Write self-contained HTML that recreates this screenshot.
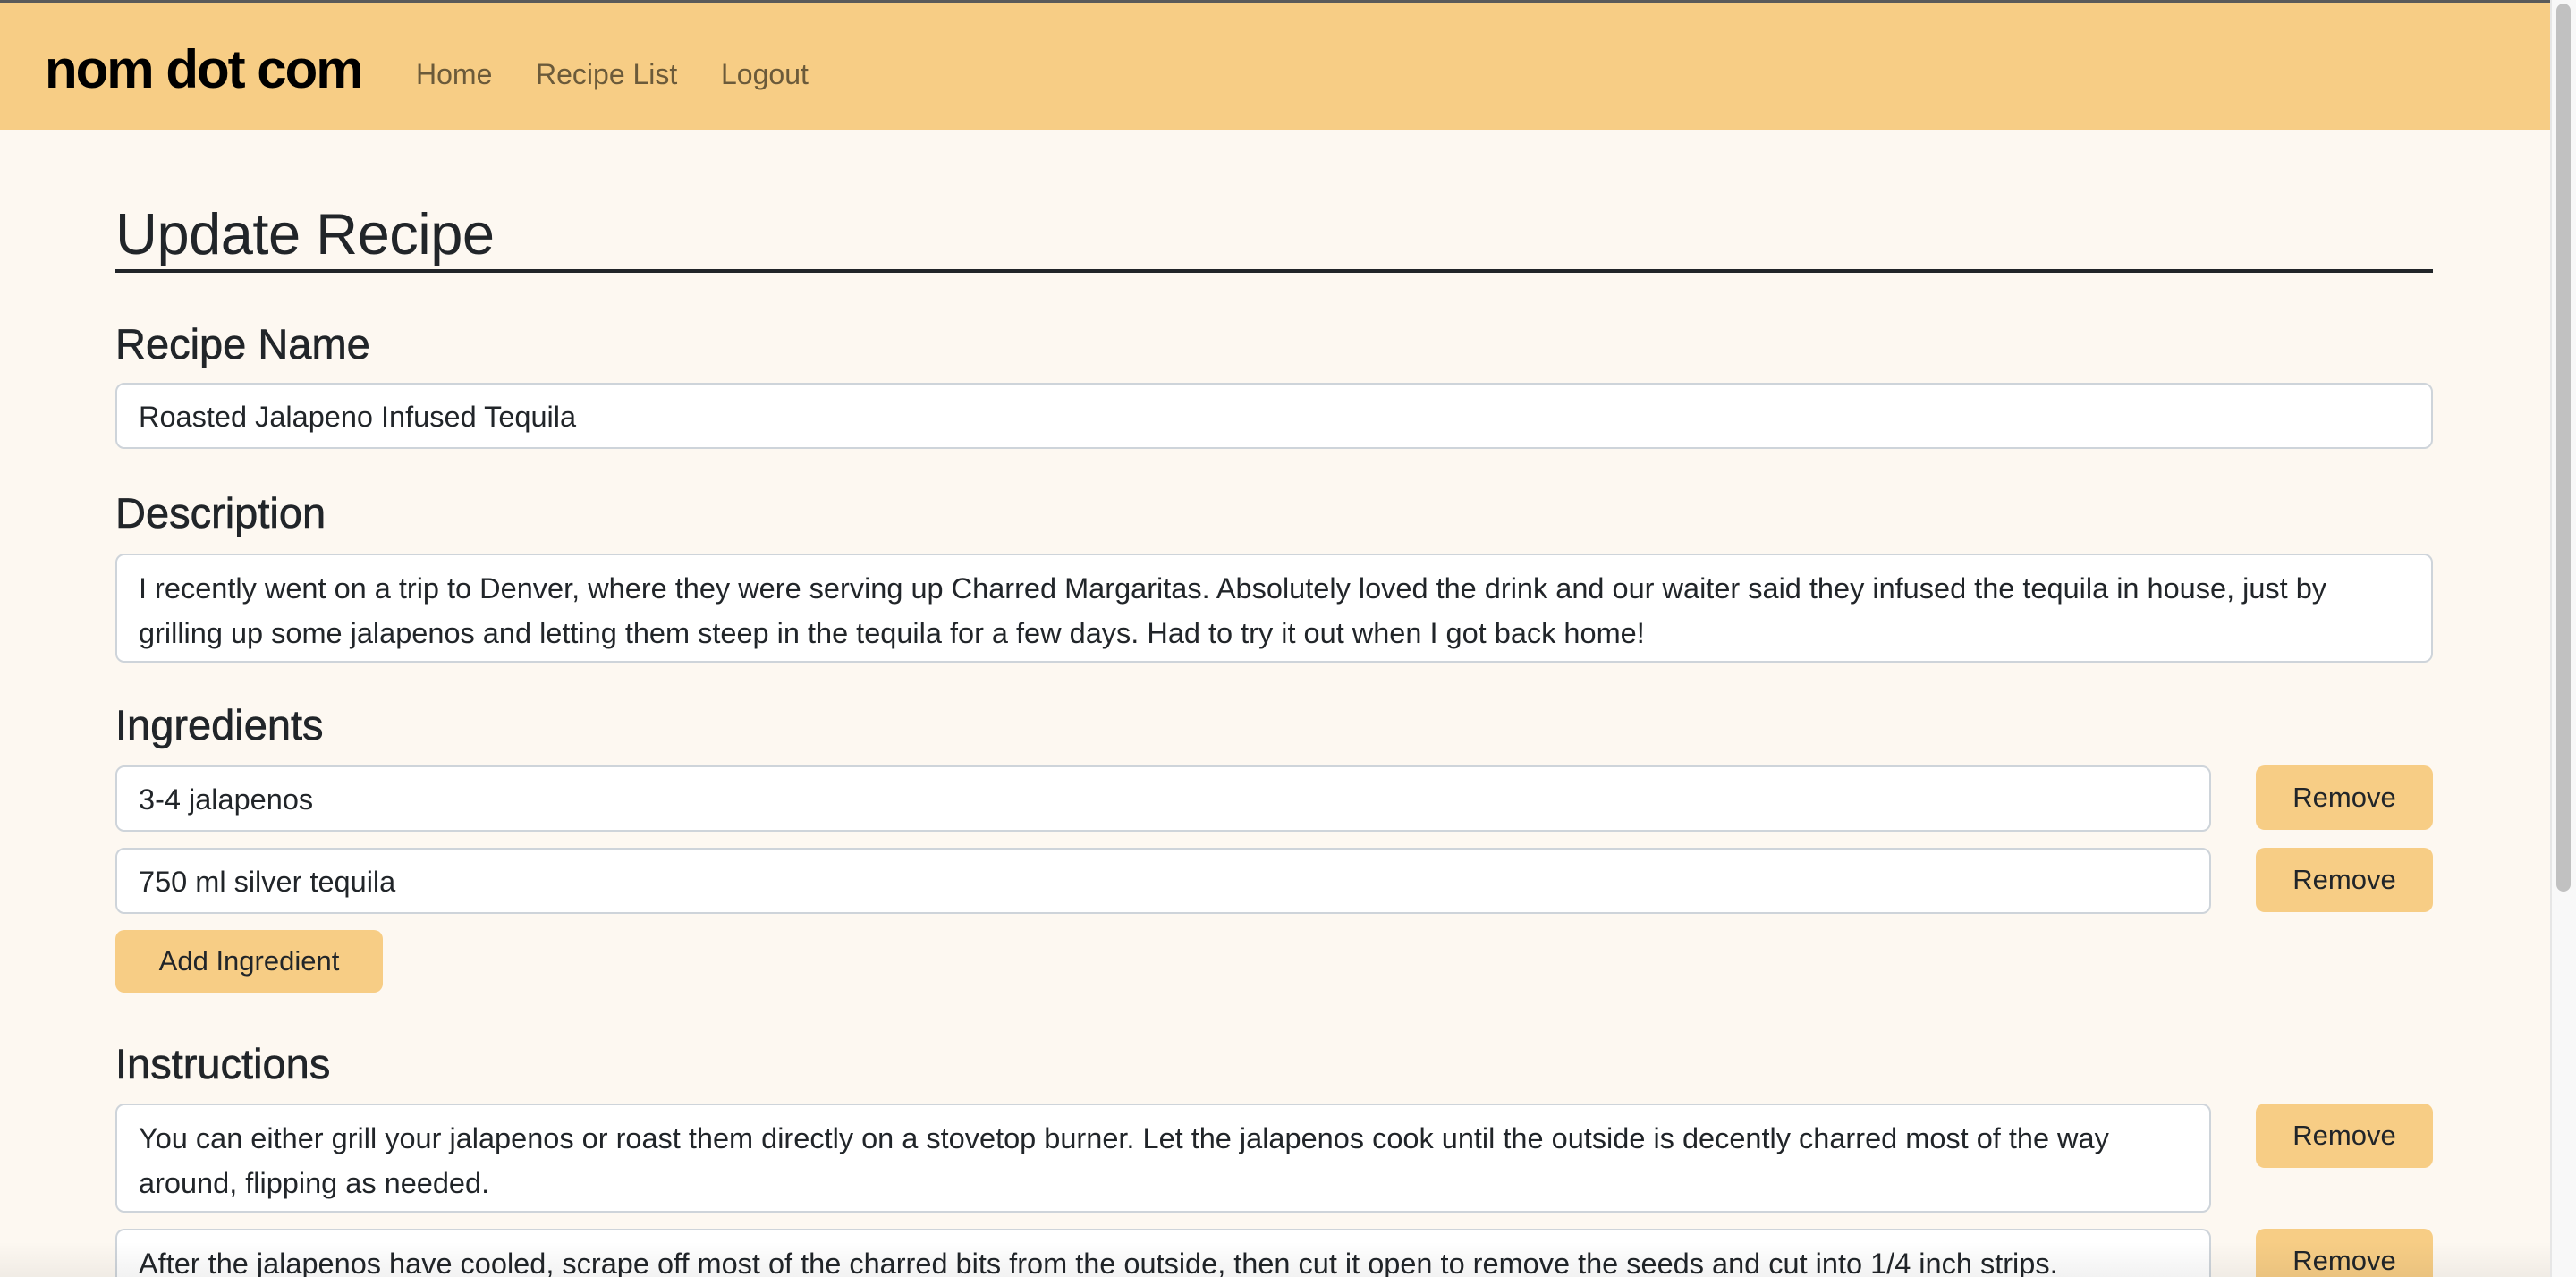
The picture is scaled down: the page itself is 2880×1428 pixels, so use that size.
<!DOCTYPE html>
<html><head><meta charset="utf-8">
<style>
*{box-sizing:border-box;margin:0;padding:0}
html,body{width:2880px;height:1428px;overflow:hidden;background:#fdf8f1;font-family:"Liberation Sans",sans-serif;color:#212529;position:relative}
.hdr{position:absolute;left:0;top:0;width:2851px;height:145px;background:#f7cd85;border-top:3px solid #5a5a5a}
.logo{position:absolute;left:50px;top:40px;font-size:60px;font-weight:bold;letter-spacing:-2px;color:#000}
.nav{position:absolute;top:62px;font-size:32px;color:#6b5a3a}
.sb{position:absolute;left:2851px;top:0;width:29px;height:1428px;background:#f8f8f8;border-left:2px solid #e6e6e6}
.thumb{position:absolute;left:2858px;top:4px;width:16px;height:993px;background:#c1c1c1;border-radius:8px}
.abs{position:absolute}
h1{position:absolute;left:129px;top:224px;font-size:65px;font-weight:normal;letter-spacing:-0.5px}
.rule{position:absolute;left:129px;top:301px;width:2591px;height:4px;background:#212529}
.lbl{position:absolute;left:129px;font-size:47px;-webkit-text-stroke:0.6px #212529}
.in{position:absolute;background:#fff;border:2px solid #ced4da;border-radius:10px;font-size:32.5px;padding-left:24px;white-space:nowrap;overflow:hidden}
.btn{position:absolute;background:#f7cd85;border-radius:10px;font-size:31px;text-align:center}
</style></head><body>
<div class="hdr">
<div class="logo">nom dot com</div>
<div class="nav" style="left:465px">Home</div>
<div class="nav" style="left:599px">Recipe List</div>
<div class="nav" style="left:806px">Logout</div>
</div>
<div class="sb"></div><div class="thumb"></div>

<h1>Update Recipe</h1>
<div class="rule"></div>

<div class="lbl" style="top:357px">Recipe Name</div>
<div class="in" style="left:129px;top:428px;width:2591px;height:74px;line-height:72px">Roasted Jalapeno Infused Tequila</div>

<div class="lbl" style="top:546px">Description</div>
<div class="in" style="left:129px;top:619px;width:2591px;height:122px;line-height:50px;padding-top:12px">I recently went on a trip to Denver, where they were serving up Charred Margaritas. Absolutely loved the drink and our waiter said they infused the tequila in house, just by<br>grilling up some jalapenos and letting them steep in the tequila for a few days. Had to try it out when I got back home!</div>

<div class="lbl" style="top:783px">Ingredients</div>
<div class="in" style="left:129px;top:856px;width:2343px;height:74px;line-height:72px">3-4 jalapenos</div>
<div class="btn" style="left:2522px;top:856px;width:198px;height:72px;line-height:72px">Remove</div>
<div class="in" style="left:129px;top:948px;width:2343px;height:74px;line-height:72px">750 ml silver tequila</div>
<div class="btn" style="left:2522px;top:948px;width:198px;height:72px;line-height:72px">Remove</div>
<div class="btn" style="left:129px;top:1040px;width:299px;height:70px;line-height:70px">Add Ingredient</div>

<div class="lbl" style="top:1162px">Instructions</div>
<div class="in" style="left:129px;top:1234px;width:2343px;height:122px;line-height:50px;padding-top:12px">You can either grill your jalapenos or roast them directly on a stovetop burner. Let the jalapenos cook until the outside is decently charred most of the way<br>around, flipping as needed.</div>
<div class="btn" style="left:2522px;top:1234px;width:198px;height:72px;line-height:72px">Remove</div>
<div class="in" style="left:129px;top:1374px;width:2343px;height:54px;line-height:50px;padding-top:12px;border-bottom:none;border-radius:10px 10px 0 0">After the jalapenos have cooled, scrape off most of the charred bits from the outside, then cut it open to remove the seeds and cut into 1/4 inch strips.</div>
<div class="btn" style="left:2522px;top:1374px;width:198px;height:54px;line-height:72px;border-radius:10px 10px 0 0;overflow:hidden">Remove</div>
<div class="abs" style="left:0;top:1388px;width:2851px;height:40px;background:linear-gradient(rgba(0,0,0,0),rgba(0,0,0,0.05))"></div>
</body></html>
